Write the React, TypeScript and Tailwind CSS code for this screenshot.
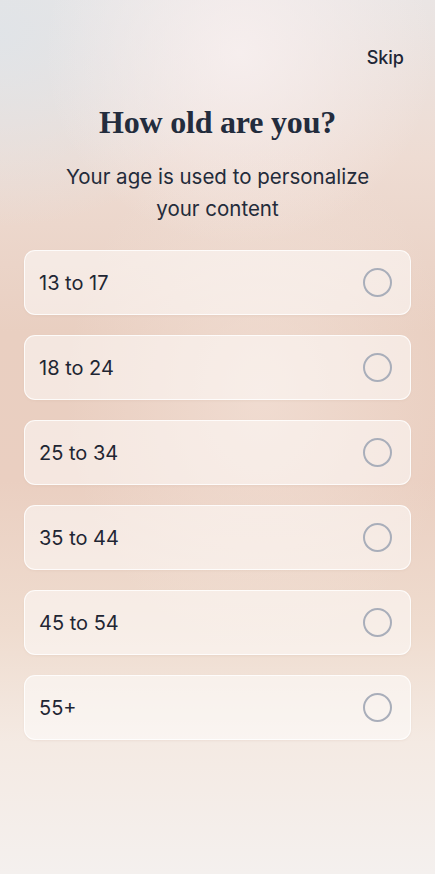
import React from 'react'

const ages = ['13 to 17', '18 to 24', '25 to 34', '35 to 44', '45 to 54', '55+']

export default function App() {
  return (
    <div
      className="relative w-[435px] h-[874px] overflow-hidden text-[#1e2636]"
      style={{ fontFamily: 'Inter, "Noto Sans", sans-serif' }}
    >
      {/* background glow */}
      <div className="absolute inset-0 bg-[linear-gradient(180deg,#eae5e4_0%,#eedcd3_18%,#e9cfc1_38%,#eacfc1_55%,#efdccf_72%,#f4eae3_85%,#f4f0ee_100%)]" />
      <div className="absolute inset-0 bg-[radial-gradient(ellipse_55%_22%_at_0%_4%,rgba(224,228,232,0.95),transparent)]" />
      <div className="absolute inset-0 bg-[radial-gradient(ellipse_45%_22%_at_55%_6%,rgba(248,240,240,0.85),transparent)]" />
      <div className="absolute inset-0 bg-[radial-gradient(ellipse_45%_30%_at_60%_45%,rgba(246,232,224,0.5),transparent)]" />

      <div className="relative flex flex-col">
        <div className="flex justify-end pr-[31px] pt-[46px]">
          <span className="text-[18px] leading-[24px] font-medium">Skip</span>
        </div>

        <h1
          className="mt-[32px] text-center text-[32px] leading-[40px] font-bold tracking-[-0.2px] text-[#232c3d]"
          style={{ fontFamily: '"Liberation Serif", serif' }}
        >
          How old are you?
        </h1>

        <p className="mt-[19px] text-center text-[20.5px] leading-[32px] text-[#232b3a] px-8">
          Your age is used to personalize
          <br />
          your content
        </p>

        <div className="mt-[25px] flex flex-col gap-5 px-6">
          {ages.map(a => (
            <div
              key={a}
              className="h-[65px] rounded-[11px] border border-white/80 bg-white/50 flex items-center justify-between pl-[14px] pr-[18px] shadow-[0_1px_2px_rgba(200,170,150,0.15)]"
            >
              <span className="text-[20px] text-[#1f2633]">{a}</span>
              <span className="w-[29px] h-[29px] rounded-full border-2 border-[#a9aeba]" />
            </div>
          ))}
        </div>
      </div>
    </div>
  )
}
